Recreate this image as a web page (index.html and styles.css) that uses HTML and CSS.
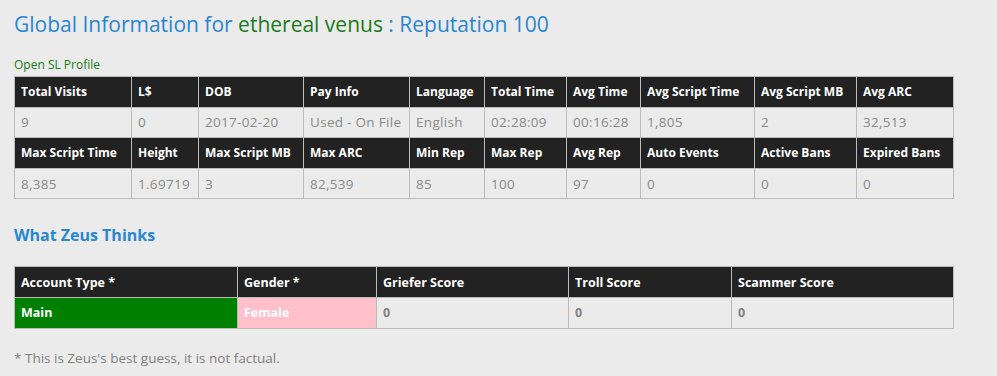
FILE: index.html
```html
<!DOCTYPE html>
<html>
<head>
<meta charset="utf-8">
<link rel="stylesheet" href="styles.css">
</head>
<body>
<div class="page">
  <h1 class="title">Global Information for <span class="name">ethereal venus</span> : Reputation 100</h1>
  <a class="profile" href="#">Open SL Profile</a>
  <table class="grid info">
    <colgroup>
      <col style="width:117px"><col style="width:67px"><col style="width:105px"><col style="width:106px"><col style="width:75px"><col style="width:82px"><col style="width:74px"><col style="width:114px"><col style="width:102px"><col style="width:97px">
    </colgroup>
    <tr class="head"><th>Total Visits</th><th>L$</th><th>DOB</th><th>Pay Info</th><th>Language</th><th>Total Time</th><th>Avg Time</th><th>Avg Script Time</th><th>Avg Script MB</th><th>Avg ARC</th></tr>
    <tr><td>9</td><td>0</td><td>2017-02-20</td><td>Used - On File</td><td>English</td><td>02:28:09</td><td>00:16:28</td><td>1,805</td><td>2</td><td>32,513</td></tr>
    <tr class="head"><th>Max Script Time</th><th>Height</th><th>Max Script MB</th><th>Max ARC</th><th>Min Rep</th><th>Max Rep</th><th>Avg Rep</th><th>Auto Events</th><th>Active Bans</th><th>Expired Bans</th></tr>
    <tr><td>8,385</td><td>1.69719</td><td>3</td><td>82,539</td><td>85</td><td>100</td><td>97</td><td>0</td><td>0</td><td>0</td></tr>
  </table>
  <h2 class="section">What Zeus Thinks</h2>
  <table class="grid zeus">
    <colgroup>
      <col style="width:223px"><col style="width:139px"><col style="width:192px"><col style="width:163px"><col style="width:222px">
    </colgroup>
    <tr class="head"><th>Account Type *</th><th>Gender *</th><th>Griefer Score</th><th>Troll Score</th><th>Scammer Score</th></tr>
    <tr><td class="main">Main</td><td class="female">Female</td><td class="bold">0</td><td class="bold">0</td><td class="bold">0</td></tr>
  </table>
  <p class="note">* This is Zeus's best guess, it is not factual.</p>
</div>
</body>
</html>
```

FILE: styles.css
```css
html, body {
  margin: 0;
  padding: 0;
  background: #ebebeb;
}
body {
  font-family: "Open Sans", "DejaVu Sans", sans-serif;
  color: #777;
}
.page {
  padding: 9px 14px 0 14px;
}
.title {
  margin: 0;
  font-size: 21px;
  font-weight: 400;
  line-height: 30px;
  color: #2a86d1;
}
.title .name {
  color: #1c7a1c;
}
.profile {
  display: block;
  margin-top: 18px;
  margin-bottom: 3px;
  font-size: 12px;
  line-height: 16px;
  color: #1c7a1c;
  text-decoration: none;
}
.grid {
  border-collapse: collapse;
  table-layout: fixed;
  width: 940px;
}
.grid th, .grid td {
  border: 1px solid #bbb;
  height: 29.6px;
  padding: 0 6px;
  text-align: left;
  white-space: nowrap;
  font-size: 12px;
}
.grid th {
  background: #222;
  color: #fff;
  font-weight: 700;
}
.grid td {
  color: #8a8a8a;
  font-size: 13.5px;
  letter-spacing: 0.3px;
  font-weight: 400;
  background: #ebebeb;
}
.section {
  margin: 25px 0 0 0;
  font-size: 16px;
  font-weight: 700;
  line-height: 22px;
  color: #2a86d1;
}
.zeus {
  margin-top: 20px;
}
.zeus th {
  font-size: 12.5px;
}
.zeus td.bold {
  font-weight: 700;
  font-size: 12.5px;
  letter-spacing: 0;
  color: #808080;
}
.zeus td.main {
  background: #008000;
  color: #fff;
  font-weight: 700;
  font-size: 12.5px;
  letter-spacing: 0;
}
.zeus td.female {
  background: #ffc0cb;
  color: #fff;
  font-weight: 700;
  font-size: 12.5px;
  letter-spacing: 0;
}
.note {
  margin: 20px 0 0 0;
  font-size: 13.5px;
  line-height: 18px;
  color: #808080;
}
```
